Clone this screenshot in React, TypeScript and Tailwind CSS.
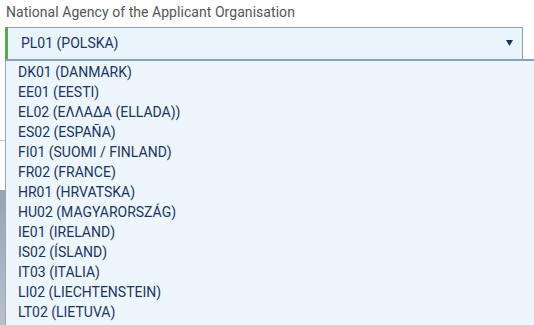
import React from "react";

const items = [
  "DK01 (DANMARK)",
  "EE01 (EESTI)",
  "EL02 (ΕΛΛΑΔΑ (ELLADA))",
  "ES02 (ESPAÑA)",
  "FI01 (SUOMI / FINLAND)",
  "FR02 (FRANCE)",
  "HR01 (HRVATSKA)",
  "HU02 (MAGYARORSZÁG)",
  "IE01 (IRELAND)",
  "IS02 (ÍSLAND)",
  "IT03 (ITALIA)",
  "LI02 (LIECHTENSTEIN)",
  "LT02 (LIETUVA)",
];

export default function App() {
  return (
    <div
      className="w-[534px] h-[325px] overflow-hidden bg-white relative"
      style={{ fontFamily: "Roboto, 'Noto Sans', sans-serif" }}
    >
      <div className="pl-[6px] pt-[3px] h-[27px] text-[14px] leading-[18px] text-[#555555] tracking-[0.05px]">
        National Agency of the Applicant Organisation
      </div>
      <div className="ml-[5px] w-[518px] h-[33px] border border-[#8aa0ad] border-l-[3px] border-l-[#5ba84a] bg-[#eaf4fc] flex items-center pl-[13px] pr-[9px] text-[14px] text-[#1a3560]">
        <span className="flex-1">PL01 (POLSKA)</span>
        <svg width="7" height="6" viewBox="0 0 7 6" className="mb-[1px]">
          <path d="M0 0 H7 L3.5 6 Z" fill="#1a3560" />
        </svg>
      </div>
      <div className="absolute left-0 top-[140px] w-[5px] h-[1px] bg-[#c8ccd2]" />
      <div className="absolute left-0 top-[190px] w-[5px] h-[135px] bg-gradient-to-b from-[#9aa3b3] to-[#b9c0cc]" />
      <div className="absolute left-[5px] top-[59px] right-0 bottom-0 border-t-2 border-t-[#8a9fba] border-l border-l-[#9aa5b3] bg-[#edf5fd] pt-[1px] pl-[12px]">
        {items.map((t) => (
          <div key={t} className="h-[20px] leading-[20px] text-[14px] text-[#1a3560] whitespace-nowrap">
            {t}
          </div>
        ))}
      </div>
    </div>
  );
}
